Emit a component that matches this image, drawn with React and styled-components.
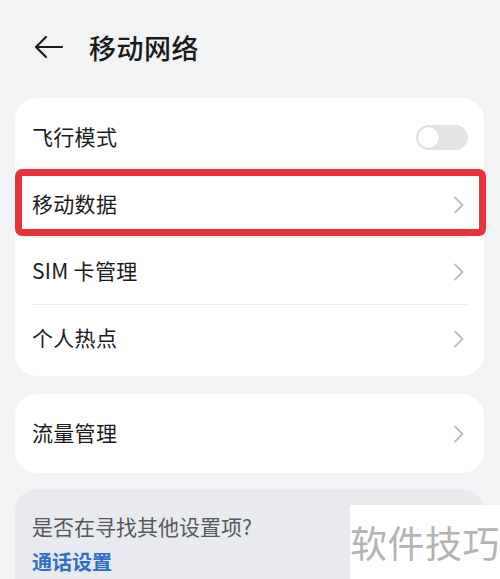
import styled, { createGlobalStyle } from "styled-components";

const GlobalStyle = createGlobalStyle`
    html, body {
        margin: 0;
        padding: 0;
        background: #f1f3f5;
        font-family: "Noto Sans CJK SC", "Noto Sans", sans-serif;
    }
`;

const Page = styled.div`
    position: relative;
    width: 500px;
    height: 579px;
    overflow: hidden;
    background: #f1f3f5;
    padding: 0 16px 0 15px;
    box-sizing: border-box;
`;

const Header = styled.div`
    display: flex;
    align-items: center;
    height: 98px;
    padding: 0 0 4px 19px;
    box-sizing: border-box;
    gap: 25px;
`;

const Title = styled.h1`
    margin: 0;
    font-size: 27px;
    font-weight: 500;
    color: #1a1a1a;
    letter-spacing: 0.5px;
`;

const Card = styled.div`
    background: ${p => (p.$muted ? "#e8eaed" : "#ffffff")};
    border-radius: 22px;
    padding: ${p => p.$pad || "0"};
    margin-bottom: ${p => p.$mb || "0"};
`;

const Row = styled.div`
    position: relative;
    display: flex;
    align-items: center;
    justify-content: space-between;
    height: ${p => p.$h || "67px"};
    padding: 0 19px 4px 17px;
    box-sizing: border-box;
    &::after {
        content: "";
        display: ${p => (p.$divider ? "block" : "none")};
        position: absolute;
        left: 17px;
        right: 17px;
        bottom: 0;
        height: 1px;
        background: #ececec;
    }
`;

const Label = styled.span`
    font-size: 21px;
    color: #1b1b1b;
    letter-spacing: 0.3px;
`;

const Side = styled.span`
    display: flex;
    margin-top: 4px;
`;

const Toggle = styled.div`
    width: 52px;
    height: 25px;
    border-radius: 13px;
    background: #e4e4e4;
    position: relative;
    margin-right: -3px;
    &::before {
        content: "";
        position: absolute;
        left: 2px;
        top: 2px;
        width: 21px;
        height: 21px;
        border-radius: 50%;
        background: #fff;
        box-shadow: 0 0 0 0.5px #d6d6d6;
    }
`;

const Highlight = styled.div`
    position: absolute;
    left: 0;
    right: -2px;
    top: -2px;
    bottom: 2px;
    border: 7px solid #e8323a;
    border-radius: 7px;
    pointer-events: none;
`;

const Hint = styled.div`
    font-size: 21px;
    color: #555a60;
    padding: 22px 17px 0;
`;

const Link = styled.div`
    font-size: 20px;
    font-weight: 700;
    color: #2e6fd0;
    padding: 6px 17px 0;
`;

const Watermark = styled.div`
    position: absolute;
    left: 350px;
    top: 505px;
    width: 150px;
    height: 74px;
    background: #fff;
    display: flex;
    align-items: center;
    justify-content: center;
    font-size: 37px;
    color: #b4b4b4;
    letter-spacing: 0.5px;
`;

const Chevron = () => (
    <svg width="12" height="18" viewBox="0 0 12 18" fill="none">
        <path d="M2 1.5 L9.5 9 L2 16.5" stroke="#bdbdbd" strokeWidth="1.8" strokeLinecap="round" strokeLinejoin="round" />
    </svg>
);

const BackArrow = () => (
    <svg width="30" height="24" viewBox="0 0 30 24" fill="none">
        <path d="M28 12 H3 M12 2 L2 12 L12 22" stroke="#1a1a1a" strokeWidth="2.2" strokeLinecap="round" strokeLinejoin="round" />
    </svg>
);

export default function App() {
    return (
        <Page>
            <GlobalStyle />
            <Header>
                <BackArrow />
                <Title>移动网络</Title>
            </Header>
            <Card $pad="6px 0 4px" $mb="18px">
                <Row $divider>
                    <Label>飞行模式</Label>
                    <Side><Toggle /></Side>
                </Row>
                <Row $divider>
                    <Label>移动数据</Label>
                    <Side><Chevron /></Side>
                    <Highlight />
                </Row>
                <Row $divider>
                    <Label>SIM 卡管理</Label>
                    <Side><Chevron /></Side>
                </Row>
                <Row>
                    <Label>个人热点</Label>
                    <Side><Chevron /></Side>
                </Row>
            </Card>
            <Card $mb="16px">
                <Row $h="79px">
                    <Label>流量管理</Label>
                    <Side><Chevron /></Side>
                </Row>
            </Card>
            <Card $muted $pad="0 0 40px">
                <Hint>是否在寻找其他设置项?</Hint>
                <Link>通话设置</Link>
            </Card>
            <Watermark>软件技巧</Watermark>
        </Page>
    );
}
